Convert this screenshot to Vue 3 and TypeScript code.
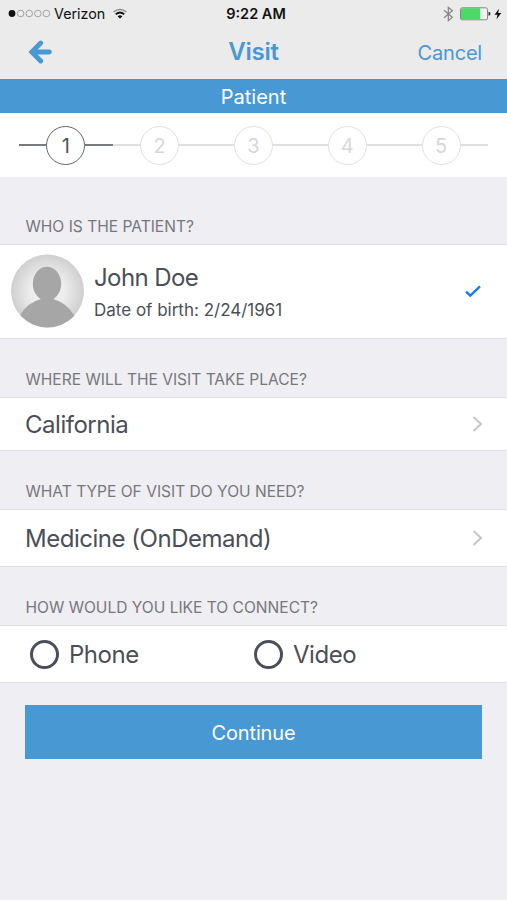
<script setup lang="ts">
import { ref } from 'vue'

type Connection = 'phone' | 'video'

const steps: number[] = [1, 2, 3, 4, 5]
const currentStep = ref<number>(1)
const connection = ref<Connection | null>(null)
const connections: { id: Connection; label: string }[] = [
  { id: 'phone', label: 'Phone' },
  { id: 'video', label: 'Video' },
]
</script>

<template>
  <main class="screen">
    <header class="top">
      <div class="status">
        <div class="carrier">
          <svg class="signal" width="42" height="10" viewBox="0 0 42 10">
            <circle cx="4" cy="4.5" r="3.4" fill="#111" />
            <circle v-for="n in 4" :key="n" :cx="4 + n * 8.6" cy="4.5" r="3.3" fill="none" stroke="#9a9a9a" stroke-width="0.9" />
          </svg>
          <span class="carrier-name">Verizon</span>
          <svg class="wifi" width="14" height="12" viewBox="0 0 14 12" fill="none">
            <path d="M0.6 4Q7 -1.4 13.4 4" stroke="#888" stroke-width="1.3" />
            <path d="M2.8 6.3Q7 2.7 11.2 6.3" stroke="#111" stroke-width="1.8" />
            <path d="M4.6 8.4Q7 6.2 9.4 8.4L7 10.6Z" fill="#111" />
          </svg>
        </div>
        <span class="time">9:22 AM</span>
        <div class="power">
          <svg width="11" height="16" viewBox="0 0 11 16" fill="none">
            <path d="M1 4.3L9.3 11.2L5.3 14.7V1.3L9.3 4.8L1 11.7" stroke="#858585" stroke-width="1.2" />
          </svg>
          <svg class="battery" width="31" height="14" viewBox="0 0 31 14">
            <rect x="0.5" y="0.8" width="27" height="12" rx="1.8" fill="#f2f2f2" stroke="#858585" />
            <path d="M2.3 1.3H20.3V12.3H2.3Q1 12.3 1 11V2.6Q1 1.3 2.3 1.3Z" fill="#4cd964" />
            <path d="M28.5 4.8Q30.5 5 30.5 6.8T28.5 8.8Z" fill="#333" />
          </svg>
          <svg class="bolt" width="8" height="12" viewBox="0 0 8 12">
            <path d="M5 0.8L0.5 6.7H3.4L2.5 11.3L7.3 4.9H4.2Z" fill="#111" />
          </svg>
        </div>
      </div>
      <nav class="nav">
        <button class="back" type="button" aria-label="Back">
          <svg width="25" height="24" viewBox="0 0 25 24" fill="none" stroke="#4898d4" stroke-width="4.8" stroke-linecap="round">
            <path d="M4.5 12H21.4" />
            <path d="M12.7 3L3.8 12L12.7 21" />
          </svg>
        </button>
        <h1>Visit</h1>
        <button class="cancel" type="button">Cancel</button>
      </nav>
    </header>

    <div class="banner">Patient</div>

    <ol class="steps">
      <li v-for="step in steps" :key="step" class="step" :class="{ active: step === currentStep }">
        <span class="num">{{ step }}</span>
      </li>
    </ol>

    <section>
      <h2 class="tall">WHO IS THE PATIENT?</h2>
      <div class="row patient">
        <svg class="avatar" width="74" height="75" viewBox="0 0 74 75">
          <defs>
            <radialGradient id="avatar-bg">
              <stop offset="0.45" stop-color="#eeeeee" />
              <stop offset="1" stop-color="#cfcfcf" />
            </radialGradient>
            <clipPath id="avatar-clip"><circle cx="37.5" cy="37" r="36.5" /></clipPath>
          </defs>
          <circle cx="37.5" cy="37" r="36.5" fill="url(#avatar-bg)" />
          <g clip-path="url(#avatar-clip)" fill="#a6a6a6">
            <ellipse cx="37" cy="29.8" rx="14.2" ry="17" />
            <path d="M31 40V45Q17 48.5 9.5 62V74H67V66Q58 49 43 45V40Z" />
          </g>
        </svg>
        <div class="person">
          <span class="name">John Doe</span>
          <span class="birth">Date of birth: 2/24/1961</span>
        </div>
        <svg class="check" width="16" height="13" viewBox="0 0 16 13" fill="none">
          <path d="M1 6.7L5.3 10.7L15 1.3" stroke="#157cf0" stroke-width="2.4" />
        </svg>
      </div>
    </section>

    <section>
      <h2>WHERE WILL THE VISIT TAKE PLACE?</h2>
      <div class="row place">
        <span>California</span>
        <svg class="chevron" width="11" height="16" viewBox="0 0 11 16" fill="none">
          <path d="M1.5 1L9 8L1.5 15" stroke="#c5c5c9" stroke-width="2" />
        </svg>
      </div>
    </section>

    <section>
      <h2>WHAT TYPE OF VISIT DO YOU NEED?</h2>
      <div class="row">
        <span>Medicine (OnDemand)</span>
        <svg class="chevron" width="11" height="16" viewBox="0 0 11 16" fill="none">
          <path d="M1.5 1L9 8L1.5 15" stroke="#c5c5c9" stroke-width="2" />
        </svg>
      </div>
    </section>

    <section>
      <h2>HOW WOULD YOU LIKE TO CONNECT?</h2>
      <div class="row">
        <label v-for="item in connections" :key="item.id" class="choice">
          <input v-model="connection" type="radio" name="connection" :value="item.id" />
          <span>{{ item.label }}</span>
        </label>
      </div>
    </section>

    <button class="continue" type="button">Continue</button>
  </main>
</template>

<style>
body {
  margin: 0;
  background: #eeeef3;
}
</style>

<style scoped>
.screen {
  width: 507px;
  height: 900px;
  box-sizing: border-box;
  overflow: hidden;
  background: #eeeef3;
  color: #4b4f57;
  font-family: Inter, "Liberation Sans", sans-serif;
}
button {
  padding: 0;
  border: 0;
  background: none;
  font-family: inherit;
}
svg {
  display: block;
  flex: none;
}
.top {
  height: 79px;
  background: #ebebeb;
}
.status {
  display: grid;
  grid-template-columns: 1fr auto 1fr;
  align-items: center;
  height: 27px;
  padding: 0 3px 0 8px;
  color: #111;
}
.carrier,
.power {
  display: flex;
  align-items: center;
}
.carrier-name {
  margin-left: 4px;
  font-size: 14.3px;
}
.wifi {
  margin-left: 8px;
}
.time {
  font-size: 14.5px;
  font-weight: 600;
}
.power {
  justify-content: flex-end;
  padding-right: 2px;
}
.battery {
  margin-left: 6px;
}
.bolt {
  margin-left: 3px;
}
.nav {
  display: grid;
  grid-template-columns: 1fr auto 1fr;
  align-items: center;
  height: 49px;
  padding: 0 25px;
  color: #4898d4;
}
.back {
  justify-self: start;
  margin-left: 3px;
}
h1 {
  margin: 0;
  font-size: 24px;
  font-weight: 600;
  letter-spacing: -0.25px;
}
.cancel {
  justify-self: end;
  padding-top: 2px;
  color: inherit;
  font-size: 20px;
  letter-spacing: -0.2px;
}
.banner {
  height: 34px;
  background: #4898d4;
  color: #fff;
  font-size: 20px;
  line-height: 36px;
  text-align: center;
}
.steps {
  display: flex;
  height: 64px;
  margin: 0;
  padding: 0 19px;
  background: #fff;
  list-style: none;
}
.step {
  display: flex;
  flex: 1;
  align-items: center;
  color: #d6d8d8;
}
.step::before,
.step::after {
  flex: 1;
  height: 2px;
  background: #dfe1e1;
  content: "";
}
.num {
  width: 37px;
  height: 37px;
  border: 1.5px solid #dfe1e1;
  border-radius: 50%;
  font-size: 20px;
  line-height: 39px;
  text-align: center;
}
.step.active {
  color: #50555a;
}
.step.active::before,
.step.active::after {
  background: #777b7e;
}
.step.active .num {
  border-color: #62666a;
}
h2 {
  display: flex;
  align-items: flex-end;
  box-sizing: border-box;
  height: 58px;
  margin: 0;
  padding: 0 25.5px 7px;
  color: #77777c;
  font-size: 15.55px;
  font-weight: 400;
  line-height: 20px;
}
.tall {
  height: 67px;
}
.row {
  display: flex;
  align-items: center;
  box-sizing: border-box;
  height: 58px;
  padding: 0 24px 0 25px;
  border-top: 1px solid #e0e0e4;
  border-bottom: 1px solid #e0e0e4;
  background: #fff;
  font-size: 24px;
  letter-spacing: -0.48px;
}
.patient {
  height: 95px;
  padding: 0 26px 0 10px;
}
.place {
  height: 54px;
}
.person {
  display: flex;
  flex-direction: column;
  margin-left: 10px;
  padding-top: 2px;
}
.name {
  line-height: 30px;
  letter-spacing: -0.6px;
}
.birth {
  margin-top: 5px;
  font-size: 17px;
  line-height: 24px;
  letter-spacing: 0;
}
.check,
.chevron {
  margin-left: auto;
}
.choice {
  display: flex;
  align-items: center;
  width: 224px;
}
.choice input {
  width: 29px;
  height: 29px;
  margin: 0 10px 0 5px;
  border: 3px solid #4b4e59;
  border-radius: 50%;
  appearance: none;
}
.choice input:checked {
  background: #4898d4;
}
.continue {
  display: block;
  width: 457px;
  height: 54px;
  margin: 22px 25px 0;
  padding-top: 1px;
  background: #4898d4;
  color: #fff;
  font-size: 20px;
  letter-spacing: -0.15px;
}
</style>
